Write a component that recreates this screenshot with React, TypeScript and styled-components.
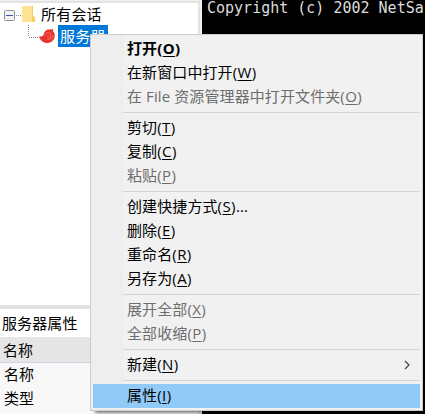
import React from 'react';
import styled, { createGlobalStyle } from 'styled-components';

const GlobalStyle = createGlobalStyle`
  * { box-sizing: border-box; }
  body { margin: 0; overflow: hidden; background: #000; }
`;

const Screen = styled.div`
  position: relative;
  display: flex;
  width: 425px;
  height: 414px;
  overflow: hidden;
  font: 15px/24px 'Open Sans', 'Noto Sans CJK SC', sans-serif;
  letter-spacing: 0.1px;
  color: #000;
`;

const Sidebar = styled.div`
  display: flex;
  flex-direction: column;
  width: 202px;
  background: #f0f0f0;
`;

const SessionTree = styled.div`
  height: 305px;
  width: 200px;
  padding-top: 4px;
  background: #fff;
  border-top: 1px solid #f0f0f0;
  border-right: 2px solid #e3e3e3;
  box-shadow: inset 0 2px 0 #e3e3e3;
`;

const TreeRow = styled.div<{ $indent: number; $height: number }>`
  display: flex;
  height: ${p => p.$height}px;
  padding-left: ${p => p.$indent}px;
`;

const TreeLabel = styled.span<{ $selected?: boolean }>`
  height: ${p => (p.$selected ? 22 : 20)}px;
  line-height: ${p => (p.$selected ? 22 : 18)}px;
  padding: 0 2px;
  letter-spacing: 0.2px;
  color: ${p => (p.$selected ? '#fff' : '#000')};
  background: ${p => (p.$selected ? '#0078d7' : 'transparent')};
`;

const Properties = styled.div`
  width: 200px;
  flex: 1;
  border-top: 4px solid #e3e3e3;
  border-right: 2px solid #e3e3e3;
  background: #f8f8f8;
`;

const PropertyRow = styled.div<{ $kind?: 'title' | 'header' }>`
  height: ${p => (p.$kind === 'title' ? 28 : p.$kind === 'header' ? 26 : 24)}px;
  padding-left: ${p => (p.$kind === 'title' ? 2 : p.$kind === 'header' ? 3 : 4)}px;
  line-height: ${p => (p.$kind === 'title' ? 28 : p.$kind === 'header' ? 26 : 22)}px;
  background: ${p => (p.$kind === 'title' ? '#fff' : p.$kind === 'header' ? '#e5e5e5' : '#f8f8f8')};
  border-bottom: ${p => (p.$kind === 'header' ? '1px solid #ccd5e6' : '0')};
`;

const Terminal = styled.pre`
  flex: 1;
  margin: 0;
  padding-left: 5px;
  overflow: hidden;
  background: #000;
  color: #dcdcdc;
  letter-spacing: 0;
  font: 15px/16px 'DejaVu Sans Mono', monospace;
`;

const Menu = styled.div`
  position: absolute;
  left: 90px;
  top: 34px;
  width: 333px;
  height: 377px;
  padding: 2px;
  background: linear-gradient(90deg, #eeeeee 32px, #f1f1f1 32px);
  border: 1px solid #ccc;
  box-shadow: 4px 3px 3px -1px rgba(0, 0, 0, 0.5);
`;

const MenuItem = styled.div<{ $disabled?: boolean; $active?: boolean; $bold?: boolean }>`
  display: flex;
  align-items: center;
  justify-content: space-between;
  height: 24px;
  padding: 0 9px 0 34px;
  line-height: 22px;
  white-space: pre;
  color: ${p => (p.$disabled ? '#6d6d6d' : '#000')};
  background: ${p => (p.$active ? '#91c9f7' : 'transparent')};
  font-weight: ${p => (p.$bold ? 700 : 400)};
`;

const ItemText = styled.span`
  height: 24px;
`;

const Shortcut = styled.span`
  letter-spacing: 0.4px;
`;

const Accelerator = styled.span`
  text-decoration: underline;
  text-decoration-thickness: 1px;
  text-underline-offset: 2px;
`;

const Divider = styled.div`
  height: 1px;
  margin: 3px 0 3px 30px;
  background: #d5d5d5;
`;

interface Entry {
  label: string;
  hotkey: string;
  tail?: string;
  disabled?: boolean;
  active?: boolean;
  bold?: boolean;
  submenu?: boolean;
}

const groups: Entry[][] = [
  [
    { label: '打开', hotkey: 'O', bold: true },
    { label: '在新窗口中打开', hotkey: 'W' },
    { label: '在 File 资源管理器中打开文件夹', hotkey: 'O', disabled: true },
  ],
  [
    { label: '剪切', hotkey: 'T' },
    { label: '复制', hotkey: 'C' },
    { label: '粘贴', hotkey: 'P', disabled: true },
  ],
  [
    { label: '创建快捷方式', hotkey: 'S', tail: '...' },
    { label: '删除', hotkey: 'E' },
    { label: '重命名', hotkey: 'R' },
    { label: '另存为', hotkey: 'A' },
  ],
  [
    { label: '展开全部', hotkey: 'X', disabled: true },
    { label: '全部收缩', hotkey: 'P', disabled: true },
  ],
  [{ label: '新建', hotkey: 'N', submenu: true }],
  [{ label: '属性', hotkey: 'I', active: true }],
];

const FolderTreeIcon = () => (
  <svg width="35" height="20" viewBox="0 0 35 20">
    <rect x="0.5" y="5.5" width="10" height="10" rx="1" fill="#f4f4f4" stroke="#919191" />
    <path d="M2 10.5h7" stroke="#3b56a5" />
    <path d="M12 10.5h5" stroke="#888" strokeDasharray="1 1" />
    <path d="M18 1h11v10l2 1v5H18z" fill="#ffe394" />
    <path d="M28 1h1v10l2 1v5h-3z" fill="#f3cf5e" />
  </svg>
);

const SessionIcon = () => (
  <svg width="30" height="22" viewBox="0 0 30 22">
    <path d="M0.5 0v12" fill="none" stroke="#888" strokeDasharray="1 1" />
    <path d="M1 12.5h10" fill="none" stroke="#888" strokeDasharray="1 1" />
    <path d="M11 11c2 1 3.500 0.500 4.500-1C16 6 19 4 22 4.500L25 4v2c2 2 2.500 5 1 8-2 3.500-6 5-9.500 3.500C13.500 16.500 11.500 14 11 11z" fill="#e8322d" />
    <path d="M17 11c0-3 3-4 5-2.500 2 2.500-1 5-3 3M25 10c0 3-3 5-6 4" fill="none" stroke="#f58f88" strokeWidth="0.7" />
  </svg>
);

const SubmenuArrow = () => (
  <svg width="8" height="10" viewBox="0 0 8 10">
    <path d="M2 1l4 4-4 4" fill="none" stroke="#444" strokeWidth="1.2" />
  </svg>
);

export default function App() {
  return (
    <>
      <GlobalStyle />
      <Screen>
        <Sidebar>
          <SessionTree>
            <TreeRow $indent={4} $height={20}>
              <FolderTreeIcon />
              <TreeLabel>所有会话</TreeLabel>
            </TreeRow>
            <TreeRow $indent={28} $height={22}>
              <SessionIcon />
              <TreeLabel $selected>服务器</TreeLabel>
            </TreeRow>
          </SessionTree>
          <Properties>
            <PropertyRow $kind="title">服务器属性</PropertyRow>
            <PropertyRow $kind="header">名称</PropertyRow>
            <PropertyRow>名称</PropertyRow>
            <PropertyRow>类型</PropertyRow>
          </Properties>
        </Sidebar>
        <Terminal>Copyright (c) 2002 NetSa</Terminal>
        <Menu>
          {groups.map((group, i) => (
            <React.Fragment key={i}>
              {i > 0 && <Divider />}
              {group.map(item => (
                <MenuItem key={item.label} $disabled={item.disabled} $active={item.active} $bold={item.bold}>
                  <ItemText>
                    {item.label}
                    <Shortcut>
                      (<Accelerator>{item.hotkey}</Accelerator>)
                    </Shortcut>
                    {item.tail}
                  </ItemText>
                  {item.submenu && <SubmenuArrow />}
                </MenuItem>
              ))}
            </React.Fragment>
          ))}
        </Menu>
      </Screen>
    </>
  );
}
